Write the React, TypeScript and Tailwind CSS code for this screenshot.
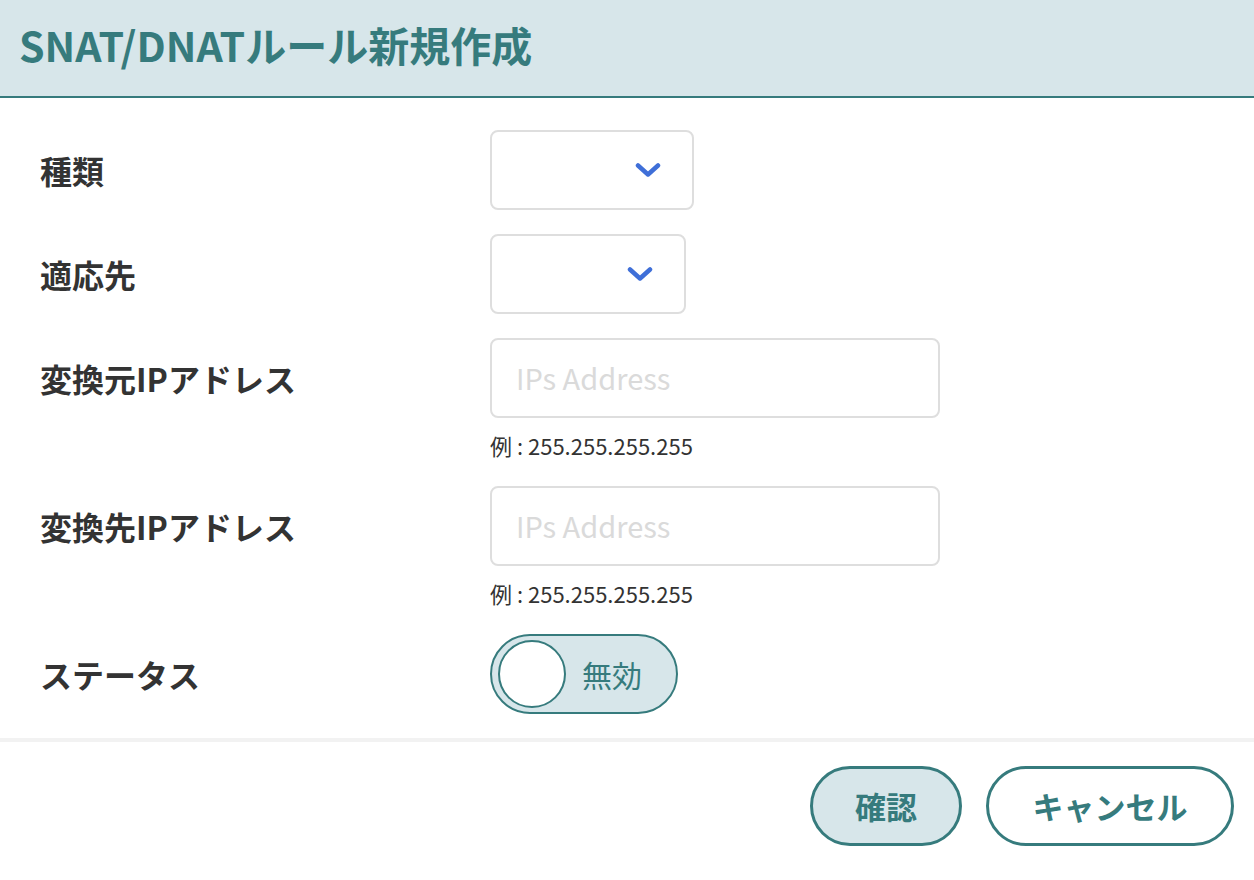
import { useState } from 'react'

const font = { fontFamily: '"Noto Sans CJK JP", "Noto Sans", sans-serif' }

function Chevron() {
  return (
    <svg width="26" height="16" viewBox="0 0 26 16" fill="none">
      <path d="M3 3.5l10 9 10-9" stroke="#3f6fd8" strokeWidth="4.5" strokeLinecap="round" strokeLinejoin="round" />
    </svg>
  )
}

function SelectBox({ width }: { width: string }) {
  return (
    <div className={`${width} h-[80px] rounded-[8px] border-2 border-[#dedede] bg-white flex items-center justify-end pr-[31px]`}>
      <Chevron />
    </div>
  )
}

function IpInput() {
  return (
    <div>
      <div className="w-[450px] h-[80px] rounded-[8px] border-2 border-[#dedede] bg-white flex items-center pl-[24px]">
        <span className="text-[29px] text-[#dadada]">IPs Address</span>
      </div>
      <p className="mt-[10px] leading-[34px] text-[22px] text-[#333]">例 : 255.255.255.255</p>
    </div>
  )
}

export default function App() {
  const [enabled, setEnabled] = useState(false)

  const rows = [
    { label: '種類', field: <SelectBox width="w-[204px]" /> },
    { label: '適応先', field: <SelectBox width="w-[196px]" /> },
    { label: '変換元IPアドレス', field: <IpInput />, top: true },
    { label: '変換先IPアドレス', field: <IpInput />, top: true },
    {
      label: 'ステータス',
      field: (
        <button
          onClick={() => setEnabled(!enabled)}
          className="w-[188px] h-[80px] rounded-full border-2 border-[#367b7d] bg-[#d7e6ea] flex items-center pl-[6px] gap-[16px]"
        >
          <span className="w-[68px] h-[68px] rounded-full bg-white border-2 border-[#367b7d]" />
          <span className="text-[30px] text-[#367b7d]">{enabled ? '有効' : '無効'}</span>
        </button>
      ),
    },
  ]

  return (
    <div className="w-[1254px] h-[880px] bg-white" style={font}>
      {/* Header */}
      <div className="h-[98px] bg-[#d7e6ea] border-b-2 border-[#367b7d] flex items-center pl-[19px] pb-[6px]">
        <h1 className="text-[41px] font-bold text-[#367b7d]">SNAT/DNATルール新規作成</h1>
      </div>

      {/* Form */}
      <div className="pt-[32px] pb-[24px] flex flex-col gap-[24px]">
        {rows.map(row => (
          <div key={row.label} className="flex">
            <div className={`w-[490px] pl-[40px] flex ${row.top ? 'h-[80px] items-center' : 'items-center'}`}>
              <span className="text-[32px] font-bold text-[#333]">{row.label}</span>
            </div>
            {row.field}
          </div>
        ))}
      </div>

      <div className="h-[4px] bg-[#f2f2f2]" />

      {/* Footer */}
      <div className="pt-[24px] pr-[20px] flex justify-end gap-[24px]">
        <button className="w-[152px] h-[80px] rounded-full border-[3px] border-[#367b7d] bg-[#d7e6ea] text-[31px] font-bold text-[#367b7d]">
          確認
        </button>
        <button className="w-[248px] h-[80px] rounded-full border-[3px] border-[#367b7d] bg-white text-[31px] font-bold text-[#367b7d]">
          キャンセル
        </button>
      </div>
    </div>
  )
}
